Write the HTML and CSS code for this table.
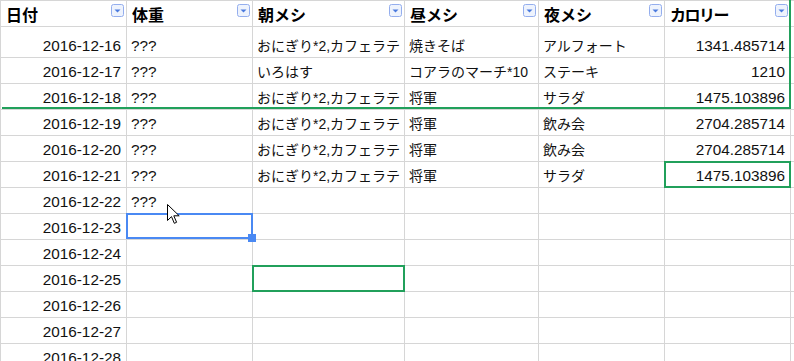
FILE: index.html
```html
<!DOCTYPE html>
<html lang="ja">
<head>
<meta charset="utf-8">
<title>食事記録</title>
<link rel="stylesheet" href="styles.css">
</head>
<body>
<div class="sheet">
  <div class="c h"><span class="ht">日付</span><svg class="dd" width="13" height="13" viewBox="0 0 13 13"><rect x="0.5" y="0.5" width="12" height="12" rx="2" fill="#eef3fd" stroke="#94aeee"/><path d="M3.5 5.5h6l-3 3z" fill="#4a7ade"/></svg></div>
  <div class="c h"><span class="ht">体重</span><svg class="dd" width="13" height="13" viewBox="0 0 13 13"><rect x="0.5" y="0.5" width="12" height="12" rx="2" fill="#eef3fd" stroke="#94aeee"/><path d="M3.5 5.5h6l-3 3z" fill="#4a7ade"/></svg></div>
  <div class="c h"><span class="ht">朝メシ</span><svg class="dd" width="13" height="13" viewBox="0 0 13 13"><rect x="0.5" y="0.5" width="12" height="12" rx="2" fill="#eef3fd" stroke="#94aeee"/><path d="M3.5 5.5h6l-3 3z" fill="#4a7ade"/></svg></div>
  <div class="c h"><span class="ht">昼メシ</span><svg class="dd" width="13" height="13" viewBox="0 0 13 13"><rect x="0.5" y="0.5" width="12" height="12" rx="2" fill="#eef3fd" stroke="#94aeee"/><path d="M3.5 5.5h6l-3 3z" fill="#4a7ade"/></svg></div>
  <div class="c h"><span class="ht">夜メシ</span><svg class="dd" width="13" height="13" viewBox="0 0 13 13"><rect x="0.5" y="0.5" width="12" height="12" rx="2" fill="#eef3fd" stroke="#94aeee"/><path d="M3.5 5.5h6l-3 3z" fill="#4a7ade"/></svg></div>
  <div class="c h"><span class="ht kana">カロリー</span><svg class="dd" width="13" height="13" viewBox="0 0 13 13"><rect x="0.5" y="0.5" width="12" height="12" rx="2" fill="#eef3fd" stroke="#94aeee"/><path d="M3.5 5.5h6l-3 3z" fill="#4a7ade"/></svg></div>
  <div class="c"></div>

  <div class="c r">2016-12-16</div><div class="c">???</div><div class="c j">おにぎり*2,カフェラテ</div><div class="c j">焼きそば</div><div class="c j">アルフォート</div><div class="c r">1341.485714</div><div class="c"></div>
  <div class="c r">2016-12-17</div><div class="c">???</div><div class="c j">いろはす</div><div class="c j">コアラのマーチ*10</div><div class="c j">ステーキ</div><div class="c r">1210</div><div class="c"></div>
  <div class="c r">2016-12-18</div><div class="c">???</div><div class="c j">おにぎり*2,カフェラテ</div><div class="c j">将軍</div><div class="c j">サラダ</div><div class="c r">1475.103896</div><div class="c"></div>
  <div class="c r">2016-12-19</div><div class="c">???</div><div class="c j">おにぎり*2,カフェラテ</div><div class="c j">将軍</div><div class="c j">飲み会</div><div class="c r">2704.285714</div><div class="c"></div>
  <div class="c r">2016-12-20</div><div class="c">???</div><div class="c j">おにぎり*2,カフェラテ</div><div class="c j">将軍</div><div class="c j">飲み会</div><div class="c r">2704.285714</div><div class="c"></div>
  <div class="c r">2016-12-21</div><div class="c">???</div><div class="c j">おにぎり*2,カフェラテ</div><div class="c j">将軍</div><div class="c j">サラダ</div><div class="c r sel-green">1475.103896</div><div class="c"></div>
  <div class="c r">2016-12-22</div><div class="c">???</div><div class="c"></div><div class="c"></div><div class="c"></div><div class="c"></div><div class="c"></div>
  <div class="c r">2016-12-23</div><div class="c sel-blue"><span class="handle"></span></div><div class="c"></div><div class="c"></div><div class="c"></div><div class="c"></div><div class="c"></div>
  <div class="c r">2016-12-24</div><div class="c"></div><div class="c"></div><div class="c"></div><div class="c"></div><div class="c"></div><div class="c"></div>
  <div class="c r">2016-12-25</div><div class="c"></div><div class="c sel-green"></div><div class="c"></div><div class="c"></div><div class="c"></div><div class="c"></div>
  <div class="c r">2016-12-26</div><div class="c"></div><div class="c"></div><div class="c"></div><div class="c"></div><div class="c"></div><div class="c"></div>
  <div class="c r">2016-12-27</div><div class="c"></div><div class="c"></div><div class="c"></div><div class="c"></div><div class="c"></div><div class="c"></div>
  <div class="c r">2016-12-28</div><div class="c"></div><div class="c"></div><div class="c"></div><div class="c"></div><div class="c"></div><div class="c"></div>

  <div class="range"></div>
  <svg class="cursor" width="13" height="21" viewBox="0 0 13 21"><path d="M0.5 0.5V16.5L4.5 12.6L7.3 19.3L9.6 18.3L6.8 11.8H12.2Z" fill="#fff" stroke="#000" stroke-width="1" stroke-linejoin="miter"/></svg>
</div>
</body>
</html>
```
FILE: styles.css
```css
html, body {
  margin: 0;
  padding: 0;
  background: #fff;
  overflow: hidden;
}
body {
  width: 794px;
  height: 361px;
}
.sheet {
  position: relative;
  display: grid;
  grid-template-columns: 126px 126px 152px 134px 126px 126px 1fr;
  grid-template-rows: 26px 31px;
  grid-auto-rows: 26px;
  font-family: "Liberation Sans", Arial, "Noto Sans CJK JP", sans-serif;
  font-size: 15.3px;
  color: #111;
}
.c {
  position: relative;
  box-sizing: border-box;
  border-left: 1px solid #d6d6d6;
  border-top: 1px solid #d6d6d6;
  display: flex;
  align-items: flex-end;
  padding: 0 5px 2px 4px;
  line-height: 18px;
  white-space: nowrap;
  overflow: hidden;
}
.c.j {
  font-size: 14px;
  padding-left: 4px;
  padding-right: 0;
}
.c.r {
  justify-content: flex-end;
}
.c.h {
  align-items: flex-start;
  justify-content: space-between;
  padding: 3px 2px 0 5px;
  overflow: visible;
}
.ht {
  font-family: "Noto Sans CJK JP", "Liberation Sans", sans-serif;
  font-weight: 700;
  font-size: 16px;
  line-height: 16px;
  margin-top: 2px;
  color: #000;
}
.ht.kana {
  letter-spacing: -1.5px;
}
.dd {
  display: block;
  flex: none;
}
.sel-green, .sel-blue {
  overflow: visible;
}
.sel-green::after {
  content: "";
  position: absolute;
  top: -1px;
  left: -1px;
  right: -1px;
  bottom: -1px;
  border: 2px solid #21a05b;
  pointer-events: none;
  z-index: 2;
}
.sel-blue::after {
  content: "";
  position: absolute;
  top: -1px;
  left: -1px;
  right: -1px;
  bottom: 0;
  border: 2px solid #4a89f3;
  z-index: 2;
}
.handle {
  position: absolute;
  right: -4px;
  bottom: -3px;
  width: 8px;
  height: 8px;
  background: #4a89f3;
  z-index: 3;
}
.range {
  position: absolute;
  left: 2px;
  top: -10px;
  width: 787px;
  height: 117px;
  border-right: 2px solid #21a05b;
  border-bottom: 2px solid #21a05b;
  z-index: 2;
}
.cursor {
  position: absolute;
  left: 167px;
  top: 204px;
  z-index: 5;
}
```
